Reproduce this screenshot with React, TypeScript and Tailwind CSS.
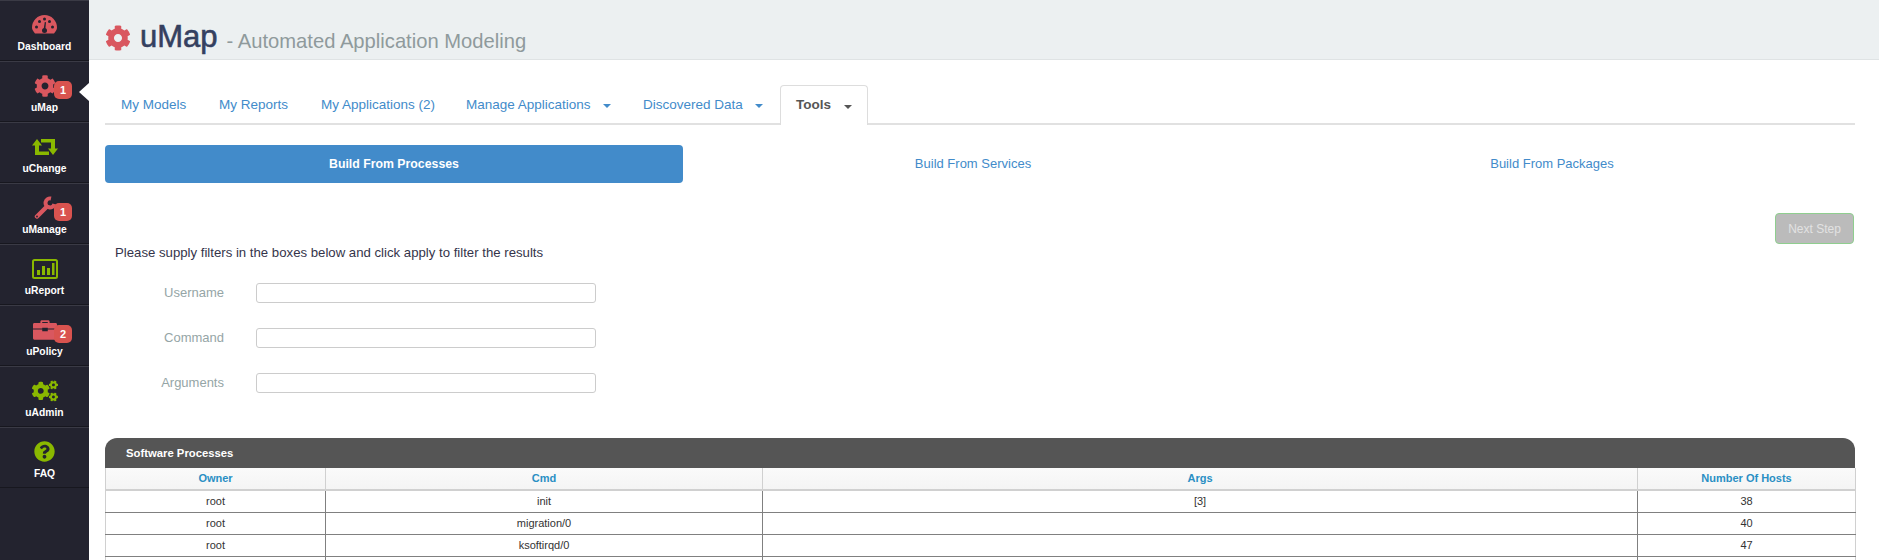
import React from 'react';
import { FaCog, FaCogs, FaQuestionCircle } from 'react-icons/fa';

const Gauge = () => (
  <svg width="25" height="19" viewBox="0 0 25 19">
    <path d="M3 18.500C1 16 0 14.500 0 12.500a12.500 12.500 0 0 1 25 0c0 2-1 3.500-3 6z" fill="#d9575f" />
    <g fill="#23232f">
      <circle cx="4.500" cy="12" r="1.500" />
      <circle cx="7.500" cy="6.500" r="1.500" />
      <circle cx="12.500" cy="4" r="1.500" />
      <circle cx="17.500" cy="6.500" r="1.500" />
      <circle cx="20.500" cy="12" r="1.500" />
      <circle cx="12.500" cy="15.500" r="2.500" />
      <path d="M11.500 15l1.300-8 1.200.2-.8 8.300z" />
    </g>
  </svg>
);

const Retweet = () => (
  <svg width="26" height="16" viewBox="0 0 26 16" fill="#8ab800">
    <path d="M5 0l5 6.500H7v6h10V16H3V6.500H0z" />
    <path d="M9 0h14v9.500h3L21 16l-5-6.500h3v-6H9z" />
  </svg>
);

const Wrench = () => (
  <svg width="22" height="23" viewBox="0 0 22 23" fill="none">
    <path d="M17 2.500A4.500 4.500 0 1 0 20.400 8" stroke="#d9575f" strokeWidth="4" />
    <path d="M12.500 11L3 20.500" stroke="#d9575f" strokeWidth="4.500" strokeLinecap="round" />
    <circle cx="3" cy="20.500" r="0.900" fill="#23232f" />
  </svg>
);

const ChartBox = () => (
  <svg width="26" height="20" viewBox="0 0 26 20">
    <rect x="1" y="1" width="24" height="18" rx="1.500" fill="none" stroke="#8ab800" strokeWidth="2" />
    <rect x="5" y="11" width="3" height="5" fill="#8ab800" />
    <rect x="10" y="7" width="3" height="9" fill="#8ab800" />
    <rect x="15" y="9" width="3" height="7" fill="#8ab800" />
    <rect x="20" y="4" width="2.500" height="12" fill="#8ab800" />
  </svg>
);

const Briefcase = () => (
  <svg width="24" height="21" viewBox="0 0 26 22">
    <path d="M8 4V2.500C8 1.500 9 1 10 1h6c1 0 2 .5 2 1.500V4h-2V3h-6v1z" fill="#d9575f" />
    <path d="M1.500 4h23c.8 0 1.500.7 1.500 1.500V10H16V9h-6v1H0V5.500C0 4.700.7 4 1.500 4z" fill="#d9575f" />
    <path d="M0 11h10v2h6v-2h10v9.500c0 .8-.7 1.500-1.500 1.500h-23C.7 22 0 21.300 0 20.500z" fill="#d9575f" />
  </svg>
);

const navItems = [
  { label: 'Dashboard', icon: <Gauge /> },
  { label: 'uMap', icon: <FaCog size={22} color="#d9575f" />, badge: '1', active: true },
  { label: 'uChange', icon: <Retweet /> },
  { label: 'uManage', icon: <Wrench />, badge: '1' },
  { label: 'uReport', icon: <ChartBox /> },
  { label: 'uPolicy', icon: <Briefcase />, badge: '2' },
  { label: 'uAdmin', icon: <FaCogs size={26} color="#8ab800" /> },
  { label: 'FAQ', icon: <FaQuestionCircle size={21} color="#8ab800" /> },
];

const tabs = [
  { label: 'My Models', w: 'w-[98px]' },
  { label: 'My Reports', w: 'w-[102px]' },
  { label: 'My Applications (2)', w: 'w-[145px]' },
  { label: 'Manage Applications', w: 'w-[177px]', caret: true },
  { label: 'Discovered Data', w: 'w-[153px]', caret: true },
];

const rows = [
  ['root', 'init', '[3]', '38'],
  ['root', 'migration/0', '', '40'],
  ['root', 'ksoftirqd/0', '', '47'],
  ['', '', '', ''],
];

const filters = ['Username', 'Command', 'Arguments'];

const colWidths = ['w-[220px]', 'w-[437px]', 'w-[875px]', 'w-[218px]'];

export default function App() {
  return (
    <div className="flex h-[560px] w-[1879px] overflow-hidden bg-white font-['Liberation_Sans',Arial,sans-serif] text-[#333]">
      {/* Sidebar */}
      <div className="w-[89px] shrink-0 bg-[#23232f]">
        {navItems.map(item => (
          <div key={item.label} className="relative flex h-[61px] flex-col items-center border-b border-t border-b-[#17171f] border-t-[#3a3a45] pt-[10px]">
            <div className="flex h-[27px] items-center justify-center">{item.icon}</div>
            <span className="mt-[2px] text-[10.300px] font-bold leading-[13px] text-white">{item.label}</span>
            {item.badge && (
              <span className="absolute left-[54px] top-[19px] flex h-[18px] w-[18px] items-center justify-center rounded-[5px] bg-[#d9534f] text-[11px] font-bold text-white">
                {item.badge}
              </span>
            )}
            {item.active && (
              <span className="absolute right-0 top-[21px] h-0 w-0 border-y-[9px] border-r-[10px] border-y-transparent border-r-white" />
            )}
          </div>
        ))}
      </div>

      {/* Main */}
      <div className="min-w-0 flex-1">
        <div className="flex h-[60px] items-end border-b border-b-[#dfe3e4] bg-[#ecf0f1] pb-[3px] pl-[16px]">
          <FaCog size={26} color="#d9575f" className="mb-[5px]" />
          <span className="ml-[9px] text-[31px] leading-[38px] text-[#34405f] [-webkit-text-stroke:0.6px_#34405f]">uMap</span>
          <span className="mb-[1px] ml-[9px] text-[20.200px] leading-[28px] text-[#8f9a9c]">- Automated Application Modeling</span>
        </div>

        <div className="ml-[16px] mr-[24px]">
          {/* Tabs */}
          <div className="mt-[25px] flex h-[40px] border-b-2 border-b-[#e1e1e1]">
            {tabs.map(tab => (
              <div key={tab.label} className={`flex h-[38px] items-center whitespace-nowrap pl-[16px] pt-[2px] text-[13.500px] text-[#428bca] ${tab.w}`}>
                {tab.label}
                {tab.caret && <span className="ml-[12px] mt-[2px] h-0 w-0 border-x-[4px] border-t-[4px] border-x-transparent border-t-[#428bca]" />}
              </div>
            ))}
            <div className="-mb-[2px] flex h-[40px] w-[88px] items-center rounded-t-[4px] border-x border-t border-[#dddddd] bg-white pl-[15px] text-[13.500px] font-bold text-[#555]">
              Tools
              <span className="ml-[13px] mt-[2px] h-0 w-0 border-x-[4px] border-t-[4px] border-x-transparent border-t-[#555]" />
            </div>
          </div>

          {/* Build modes */}
          <div className="mt-[20px] flex text-[13px]">
            <div className="flex h-[38px] w-[578px] items-center justify-center rounded-[4px] bg-[#428bca] text-[12.300px] font-bold text-white">Build From Processes</div>
            <div className="flex h-[38px] w-[580px] items-center justify-center text-[#428bca]">Build From Services</div>
            <div className="flex h-[38px] w-[578px] items-center justify-center text-[#428bca]">Build From Packages</div>
          </div>

          {/* Filters */}
          <div className="mr-[1px] mt-[30px] flex justify-end">
            <div className="flex h-[31px] w-[79px] items-center justify-center rounded-[4px] border border-[#8fce8f] bg-[#bbbbbb] text-[12px] text-[#e2e2e2]">Next Step</div>
          </div>
          <p className="ml-[10px] text-[13.200px] leading-[18px] text-[#34344a]">Please supply filters in the boxes below and click apply to filter the results</p>
          <div className="mt-[21px] flex flex-col gap-[25px]">
            {filters.map(name => (
              <div key={name} className="flex h-[20px] items-center">
                <label className="w-[119px] text-right text-[13px] text-[#95a5a6]">{name}</label>
                <input className="ml-[32px] h-[20px] w-[340px] rounded-[3px] border border-[#cccccc] bg-white" />
              </div>
            ))}
          </div>

          {/* Table */}
          <div className="mt-[45px]">
            <div className="flex h-[30px] items-center rounded-t-[12px] bg-[#555555] pl-[21px] text-[11.300px] font-bold text-white">Software Processes</div>
            <table className="w-[1750px] table-fixed border-collapse text-center text-[11px]">
              <thead>
                <tr className="h-[22px] bg-[linear-gradient(#fafafa,#f4f4f4)] font-bold text-[#2a8fc4]">
                  {['Owner', 'Cmd', 'Args', 'Number Of Hosts'].map((h, i) => (
                    <th key={h} className={`border-x border-b-2 border-[#d0d0d0] p-0 ${colWidths[i]}`}>{h}</th>
                  ))}
                </tr>
              </thead>
              <tbody>
                {rows.map((row, r) => (
                  <tr key={r} className="h-[22px]">
                    {row.map((cell, c) => (
                      <td key={c} className="border border-[#808080] p-0 first:border-l-[#d0d0d0] last:border-r-[#d0d0d0]">{cell}</td>
                    ))}
                  </tr>
                ))}
              </tbody>
            </table>
          </div>
        </div>
      </div>
    </div>
  );
}
